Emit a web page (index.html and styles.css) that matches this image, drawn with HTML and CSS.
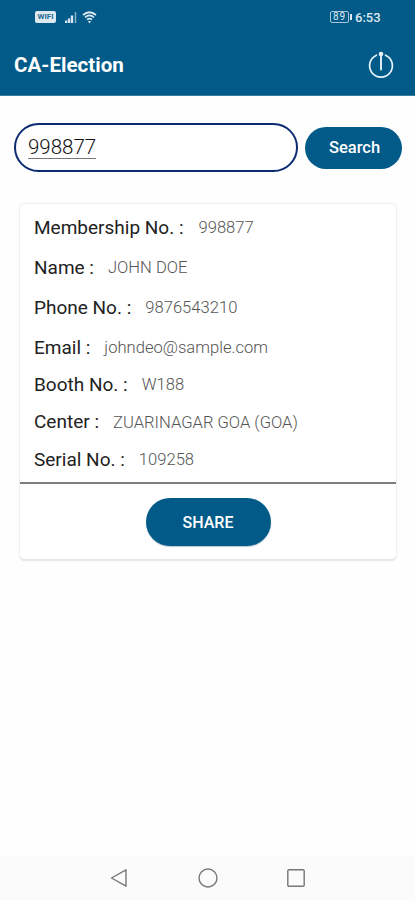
FILE: index.html
```html
<!DOCTYPE html>
<html lang="en">
<head>
<meta charset="utf-8">
<title>CA-Election</title>
<link rel="stylesheet" href="styles.css">
</head>
<body>
<header class="top">
  <div class="status">
    <span class="wifi-tag">WIFI</span>
    <svg class="signal" width="12" height="12" viewBox="0 0 12 12"><path d="M1 12V9.500M4 12V7.500M7 12V4.500" stroke="#d5e4ee" stroke-width="2.400"/><path d="M10.500 12V1" stroke="#8fb5cc" stroke-width="1.400"/></svg>
    <svg class="wifi" width="15" height="13" viewBox="0 0 15 13" fill="none" stroke="#dce9f1" stroke-width="1.700"><path d="M1 4Q7.500-1.500 14 4M3 6.300Q7.500 2.500 12 6.300M5 8.700Q7.500 6.600 10 8.700"/><path d="M5.800 10h3.400L7.500 12.500z" fill="#dce9f1" stroke="none"/></svg>
    <span class="battery">89</span><i class="battery-tip"></i>
    <span class="clock">6:53</span>
  </div>
  <div class="bar">
    <h1>CA-Election</h1>
    <svg width="28" height="30" viewBox="0 0 28 30" fill="none" stroke="#e8f2f8" stroke-linecap="round"><path d="M9.500 5.200A11.400 11.400 0 1 0 18.500 5.200" stroke-width="1.700"/><path d="M14 4V19.500" stroke-width="1.900"/><circle cx="14" cy="4" r="2.300" fill="#e8f2f8" stroke="none"/></svg>
  </div>
</header>
<main>
  <div class="search">
    <div class="field"><span>998877</span></div>
    <button class="btn search-btn">Search</button>
  </div>
  <section class="card">
    <dl>
      <div class="row wide"><dt>Membership No. :</dt><dd>998877</dd></div>
      <div class="row"><dt>Name :</dt><dd>JOHN DOE</dd></div>
      <div class="row"><dt>Phone No. :</dt><dd>9876543210</dd></div>
      <div class="row"><dt>Email :</dt><dd>johndeo@sample.com</dd></div>
      <div class="row short"><dt>Booth No. :</dt><dd>W188</dd></div>
      <div class="row short"><dt>Center :</dt><dd>ZUARINAGAR GOA (GOA)</dd></div>
      <div class="row short"><dt>Serial No. :</dt><dd>109258</dd></div>
    </dl>
    <div class="actions"><button class="btn share">SHARE</button></div>
  </section>
</main>
<nav class="nav">
  <svg width="20" height="22" viewBox="0 0 20 22"><path d="M2.500 11L17 2.800V19.200z"/></svg>
  <svg width="22" height="22" viewBox="0 0 22 22"><circle cx="11" cy="11" r="9"/></svg>
  <svg width="20" height="22" viewBox="0 0 20 22"><rect x="1.800" y="2.800" width="16.400" height="16.400" rx="1"/></svg>
</nav>
</body>
</html>
```
FILE: styles.css
```css
* { box-sizing: border-box; }
body {
  margin: 0;
  height: 900px;
  display: flex;
  flex-direction: column;
  background: #fefefe;
  font-family: Roboto, "Liberation Sans", sans-serif;
  overflow: hidden;
}
.top { height: 96px; background: #025a88; border-bottom: 1px solid #3d7ba0; color: #fff; }
.status { height: 34px; display: flex; align-items: center; padding-left: 35px; }
.wifi-tag {
  width: 21px; height: 12px; border-radius: 2px; background: #dce9f1; color: #2a6d94;
  font-size: 8px; font-weight: 700; line-height: 12px; text-align: center;
}
.signal { margin-left: 9px; }
.wifi { margin-left: 5px; }
.battery {
  margin-left: 233px; width: 19px; height: 12px; border: 1px solid #a9c6d8; border-radius: 2px;
  font-size: 10px; line-height: 10px; text-align: center; color: #dce9f1; letter-spacing: 1px;
}
.battery-tip { width: 2px; height: 6px; background: #dce9f1; margin-left: 1px; }
.clock { margin-left: 3px; font-size: 13px; font-weight: 500; color: #dce9f1; }
.bar { height: 61px; display: flex; align-items: center; justify-content: space-between; padding: 0 20px 0 14px; }
h1 { margin: 0; font-size: 20.6px; font-weight: 700; }
main { flex: 1; }
.search { display: flex; align-items: center; padding: 27px 13px 0 14px; }
.field {
  width: 284px; height: 49px; border: 2px solid #0b2c72; border-radius: 25px;
  padding-left: 12px; display: flex; align-items: center; font-size: 20.5px; font-weight: 300; color: #111; background: #fff;
}
.field span { border-bottom: 1px solid #777; line-height: 21px; margin-top: 1px; }
.btn { border: 0; background: #025a88; color: #fff; font-family: inherit; font-weight: 500; padding: 0; }
.search-btn { margin-left: 7px; width: 97px; height: 42px; border-radius: 21px; font-size: 16.5px; padding-left: 2px; }
.card {
  margin: 31px 18px 0 19px; height: 358px; background: #fff; border: 1px solid #f1f1f1;
  border-bottom: 2px solid #e8e8e8; border-radius: 6px; box-shadow: 0 0 2px #eee;
}
dl { margin: 0; height: 280px; padding: 3px 0 0 14px; border-bottom: 2px solid #7c7c7c; }
.row { height: 40px; display: flex; align-items: center; }
.short { height: 37.4px; padding-bottom: 2.500px; }
dt { font-size: 19px; color: #222; }
dd { margin: 1px 0 0 14px; font-size: 16.6px; font-weight: 300; color: #555; }
.wide dd { margin-left: 15px; }
.actions { display: flex; justify-content: center; padding-top: 14px; }
.share { width: 125px; height: 48px; border-radius: 24px; font-size: 16px; box-shadow: 0 1px 1px #b8c8d2; }
.nav { height: 45px; background: #fbfbfb; display: flex; align-items: center; padding-left: 109px; }
.nav svg { fill: none; stroke: #777; stroke-width: 1.4; stroke-linejoin: round; }
.nav svg + svg { margin-left: 67.5px; }
```
